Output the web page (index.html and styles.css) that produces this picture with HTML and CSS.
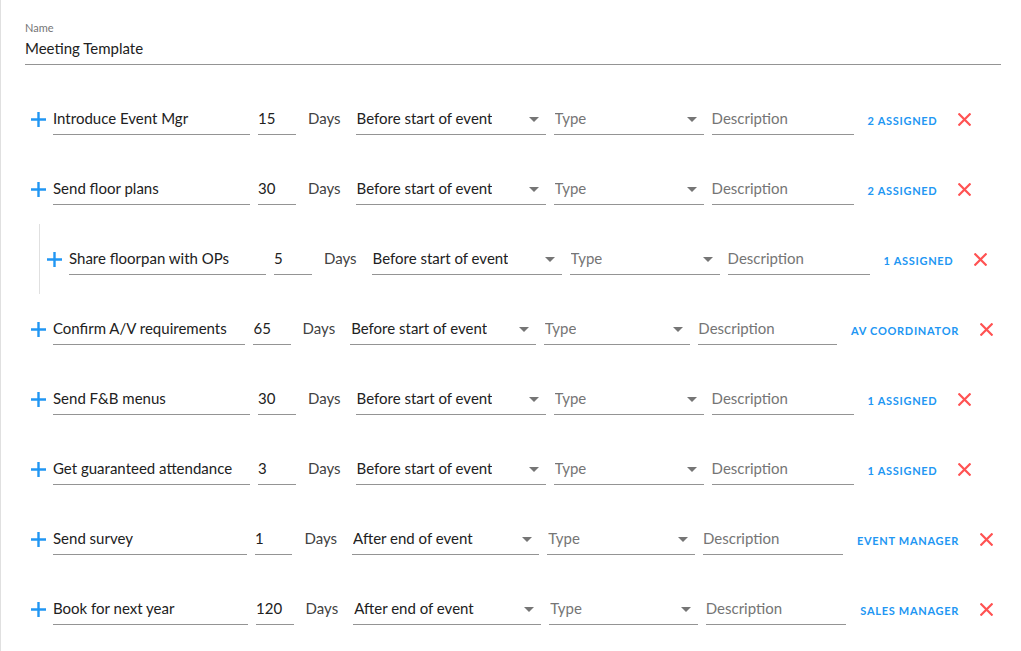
FILE: index.html
```html
<!DOCTYPE html>
<html lang="en">
<head>
<meta charset="utf-8">
<title>Meeting Template</title>
<link rel="stylesheet" href="styles.css">
</head>
<body>
<div class="page">
  <div class="name-field">
    <label class="name-label" for="name">Name</label>
    <input id="name" class="name-input" type="text" value="Meeting Template">
  </div>

  <div class="tasks">
    <div class="task">
      <button class="add" aria-label="Add subtask"><svg viewBox="0 0 15 15"><path d="M7.5 0v15M0 7.5h15"/></svg></button>
      <div class="f f-text"><input type="text" value="Introduce Event Mgr"></div>
      <div class="f f-num"><input type="text" value="15"></div>
      <span class="days">Days</span>
      <div class="f f-sel"><span>Before start of event</span><i class="arrow"></i></div>
      <div class="f f-type"><span class="ph">Type</span><i class="arrow"></i></div>
      <div class="f f-desc"><input type="text" placeholder="Description"></div>
      <button class="assign">2 Assigned</button>
      <button class="remove" aria-label="Remove"><svg viewBox="0 0 13 13"><path d="M0.5 0.5l12 12M12.5 0.5l-12 12"/></svg></button>
    </div>

    <div class="task">
      <button class="add" aria-label="Add subtask"><svg viewBox="0 0 15 15"><path d="M7.5 0v15M0 7.5h15"/></svg></button>
      <div class="f f-text"><input type="text" value="Send floor plans"></div>
      <div class="f f-num"><input type="text" value="30"></div>
      <span class="days">Days</span>
      <div class="f f-sel"><span>Before start of event</span><i class="arrow"></i></div>
      <div class="f f-type"><span class="ph">Type</span><i class="arrow"></i></div>
      <div class="f f-desc"><input type="text" placeholder="Description"></div>
      <button class="assign">2 Assigned</button>
      <button class="remove" aria-label="Remove"><svg viewBox="0 0 13 13"><path d="M0.5 0.5l12 12M12.5 0.5l-12 12"/></svg></button>
    </div>

    <div class="subtasks">
      <div class="task">
        <button class="add" aria-label="Add subtask"><svg viewBox="0 0 15 15"><path d="M7.5 0v15M0 7.5h15"/></svg></button>
        <div class="f f-text"><input type="text" value="Share floorpan with OPs"></div>
        <div class="f f-num"><input type="text" value="5"></div>
        <span class="days">Days</span>
        <div class="f f-sel"><span>Before start of event</span><i class="arrow"></i></div>
        <div class="f f-type"><span class="ph">Type</span><i class="arrow"></i></div>
        <div class="f f-desc"><input type="text" placeholder="Description"></div>
        <button class="assign">1 Assigned</button>
        <button class="remove" aria-label="Remove"><svg viewBox="0 0 13 13"><path d="M0.5 0.5l12 12M12.5 0.5l-12 12"/></svg></button>
      </div>
    </div>

    <div class="task">
      <button class="add" aria-label="Add subtask"><svg viewBox="0 0 15 15"><path d="M7.5 0v15M0 7.5h15"/></svg></button>
      <div class="f f-text"><input type="text" value="Confirm A/V requirements"></div>
      <div class="f f-num"><input type="text" value="65"></div>
      <span class="days">Days</span>
      <div class="f f-sel"><span>Before start of event</span><i class="arrow"></i></div>
      <div class="f f-type"><span class="ph">Type</span><i class="arrow"></i></div>
      <div class="f f-desc"><input type="text" placeholder="Description"></div>
      <button class="assign">AV Coordinator</button>
      <button class="remove" aria-label="Remove"><svg viewBox="0 0 13 13"><path d="M0.5 0.5l12 12M12.5 0.5l-12 12"/></svg></button>
    </div>

    <div class="task">
      <button class="add" aria-label="Add subtask"><svg viewBox="0 0 15 15"><path d="M7.5 0v15M0 7.5h15"/></svg></button>
      <div class="f f-text"><input type="text" value="Send F&amp;B menus"></div>
      <div class="f f-num"><input type="text" value="30"></div>
      <span class="days">Days</span>
      <div class="f f-sel"><span>Before start of event</span><i class="arrow"></i></div>
      <div class="f f-type"><span class="ph">Type</span><i class="arrow"></i></div>
      <div class="f f-desc"><input type="text" placeholder="Description"></div>
      <button class="assign">1 Assigned</button>
      <button class="remove" aria-label="Remove"><svg viewBox="0 0 13 13"><path d="M0.5 0.5l12 12M12.5 0.5l-12 12"/></svg></button>
    </div>

    <div class="task">
      <button class="add" aria-label="Add subtask"><svg viewBox="0 0 15 15"><path d="M7.5 0v15M0 7.5h15"/></svg></button>
      <div class="f f-text"><input type="text" value="Get guaranteed attendance"></div>
      <div class="f f-num"><input type="text" value="3"></div>
      <span class="days">Days</span>
      <div class="f f-sel"><span>Before start of event</span><i class="arrow"></i></div>
      <div class="f f-type"><span class="ph">Type</span><i class="arrow"></i></div>
      <div class="f f-desc"><input type="text" placeholder="Description"></div>
      <button class="assign">1 Assigned</button>
      <button class="remove" aria-label="Remove"><svg viewBox="0 0 13 13"><path d="M0.5 0.5l12 12M12.5 0.5l-12 12"/></svg></button>
    </div>

    <div class="task">
      <button class="add" aria-label="Add subtask"><svg viewBox="0 0 15 15"><path d="M7.5 0v15M0 7.5h15"/></svg></button>
      <div class="f f-text"><input type="text" value="Send survey"></div>
      <div class="f f-num"><input type="text" value="1"></div>
      <span class="days">Days</span>
      <div class="f f-sel"><span>After end of event</span><i class="arrow"></i></div>
      <div class="f f-type"><span class="ph">Type</span><i class="arrow"></i></div>
      <div class="f f-desc"><input type="text" placeholder="Description"></div>
      <button class="assign">Event Manager</button>
      <button class="remove" aria-label="Remove"><svg viewBox="0 0 13 13"><path d="M0.5 0.5l12 12M12.5 0.5l-12 12"/></svg></button>
    </div>

    <div class="task">
      <button class="add" aria-label="Add subtask"><svg viewBox="0 0 15 15"><path d="M7.5 0v15M0 7.5h15"/></svg></button>
      <div class="f f-text"><input type="text" value="Book for next year"></div>
      <div class="f f-num"><input type="text" value="120"></div>
      <span class="days">Days</span>
      <div class="f f-sel"><span>After end of event</span><i class="arrow"></i></div>
      <div class="f f-type"><span class="ph">Type</span><i class="arrow"></i></div>
      <div class="f f-desc"><input type="text" placeholder="Description"></div>
      <button class="assign">Sales Manager</button>
      <button class="remove" aria-label="Remove"><svg viewBox="0 0 13 13"><path d="M0.5 0.5l12 12M12.5 0.5l-12 12"/></svg></button>
    </div>
  </div>
</div>
</body>
</html>
```

FILE: styles.css
```css
* { box-sizing: border-box; }

html, body {
  margin: 0;
  padding: 0;
  background: #fff;
}

body {
  font-family: Lato, "Noto Sans", "Liberation Sans", sans-serif;
  color: #212121;
  overflow: hidden;
}

.page {
  border-left: 1px solid #e0e0e0;
  min-height: 651px;
  padding: 21px 20px 0 24px;
}

.name-field {
  display: flex;
  flex-direction: column;
}

.name-label {
  font-size: 11px;
  line-height: 14px;
  color: #757575;
}

.name-input {
  margin-top: 3px;
  border: 0;
  border-bottom: 1px solid #949494;
  padding: 0 0 6px;
  font: inherit;
  font-size: 15px;
  line-height: 20px;
  height: 27px;
  color: #212121;
  outline: none;
  background: transparent;
}

.tasks {
  margin-top: 19px;
  padding-left: 6px;
  max-width: 976px;
}

.task {
  display: flex;
  align-items: center;
  height: 70px;
}

.subtasks {
  margin-left: 8px;
  padding-left: 7px;
  border-left: 1px solid #e0e0e0;
}

.add {
  flex: none;
  width: 15px;
  height: 15px;
  margin: 1px 7px 0 0;
  padding: 0;
  border: 0;
  background: none;
  cursor: pointer;
}

.add svg {
  display: block;
  width: 15px;
  height: 15px;
  stroke: #2196f3;
  stroke-width: 2.4;
  fill: none;
}

.f {
  position: relative;
  display: flex;
  align-items: center;
  height: 32px;
  padding: 5px 0 6px;
  border-bottom: 1px solid #949494;
  font-size: 15px;
  line-height: 20px;
  min-width: 0;
  flex: 0 1 auto;
}

.f input {
  width: 100%;
  min-width: 0;
  border: 0;
  padding: 0;
  font: inherit;
  color: #212121;
  background: transparent;
  outline: none;
}

.f input::placeholder {
  color: #757575;
  opacity: 1;
}

.f-text { flex-basis: 197px; margin-right: 8px; }
.f-num { flex-basis: 38px; }
.f-sel { flex-basis: 190px; margin-right: 8px; padding-left: 1px; color: #212121; }
.f-type { flex-basis: 150px; margin-right: 8px; padding-left: 1px; }
.f-desc { flex-basis: 142px; }

.f span {
  white-space: nowrap;
  overflow: hidden;
}

.ph { color: #757575; }

.arrow {
  position: absolute;
  right: 7px;
  top: 14px;
  width: 0;
  height: 0;
  border-left: 5px solid transparent;
  border-right: 5px solid transparent;
  border-top: 5px solid #757575;
}

.days {
  flex: none;
  padding: 0 15px 3px 12px;
  font-size: 15px;
  line-height: 20px;
  color: #424242;
}

.assign {
  flex: none;
  margin-left: 6px;
  padding: 0 8px;
  height: 30px;
  border: 0;
  background: none;
  font-family: inherit;
  font-size: 11px;
  font-weight: 700;
  letter-spacing: 0.7px;
  text-transform: uppercase;
  color: #2196f3;
  cursor: pointer;
  margin-top: 3px;
}

.remove {
  flex: none;
  width: 30px;
  height: 30px;
  margin-left: 4px;
  padding: 0;
  border: 0;
  background: none;
  display: flex;
  align-items: center;
  justify-content: center;
  cursor: pointer;
}

.remove svg {
  display: block;
  width: 13px;
  height: 13px;
  stroke: #ff5252;
  stroke-width: 2.2;
  fill: none;
}
```
